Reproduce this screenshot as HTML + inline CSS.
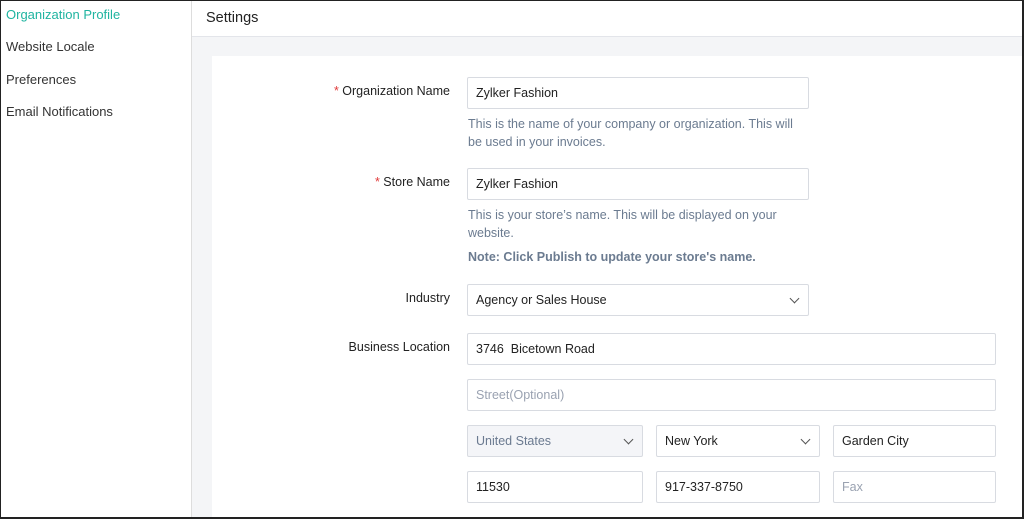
<!DOCTYPE html>
<html><head><meta charset="utf-8"><style>
*{box-sizing:border-box;margin:0;padding:0}
body{width:1024px;height:519px;overflow:hidden;font-family:"Liberation Sans",sans-serif;color:#21263c;background:#fff;position:relative}
.frame{position:absolute;left:0;top:0;width:1024px;height:519px;border:1px solid #222;border-right:2px solid #222;border-bottom:2px solid #222;z-index:10;pointer-events:none}
.side{position:absolute;left:0;top:0;width:192px;height:519px;border-right:1px solid #ddd;background:#fff}
.side div{position:absolute;left:6px;font-size:13px;color:#333}
.head{position:absolute;left:192px;top:0;right:0;height:37px;border-bottom:1px solid #e3e5ea;background:#fff;font-size:14.5px;padding:10px 0 0 14px;color:#222}
.bg{position:absolute;left:192px;top:37px;right:0;bottom:0;background:#f4f5f7}
.card{position:absolute;left:212px;top:56px;right:2px;bottom:0;background:#fff}
.lbl{position:absolute;right:574px;font-size:12.5px;color:#222;text-align:right}
.lbl b{color:#e03a3a;font-weight:normal}
.in{position:absolute;height:32px;border:1px solid #d8dbe1;border-radius:2px;background:#fff;font-size:12.5px;padding:8px 0 0 8px;color:#222}
.ph{color:#9aa2b1}
.dis{background:#f4f5f8;color:#6b7a90}
.hint{position:absolute;left:468px;font-size:12.5px;color:#6b7b90;line-height:18px}
.chev{position:absolute;right:10px;top:10px;width:7px;height:7px;border-right:1px solid #555;border-bottom:1px solid #555;transform:rotate(45deg)}
</style></head><body>
<div class="side">
<div style="top:7px;color:#1fb4a0">Organization Profile</div>
<div style="top:39px">Website Locale</div>
<div style="top:72px">Preferences</div>
<div style="top:104px">Email Notifications</div>
</div>
<div class="head">Settings</div>
<div class="bg"></div>
<div class="card"></div>
<div class="lbl" style="top:84px"><b>*</b> Organization Name</div>
<div class="in" style="left:467px;top:77px;width:342px">Zylker Fashion</div>
<div class="hint" style="top:115px">This is the name of your company or organization. This will<br>be used in your invoices.</div>
<div class="lbl" style="top:175px"><b>*</b> Store Name</div>
<div class="in" style="left:467px;top:168px;width:342px">Zylker Fashion</div>
<div class="hint" style="top:206px">This is your store’s name. This will be displayed on your<br>website.</div>
<div class="hint" style="top:248px;font-weight:bold">Note: Click Publish to update your store's name.</div>
<div class="lbl" style="top:291px">Industry</div>
<div class="in" style="left:467px;top:284px;width:342px">Agency or Sales House<span class="chev"></span></div>
<div class="lbl" style="top:340px">Business Location</div>
<div class="in" style="left:467px;top:333px;width:529px">3746&nbsp; Bicetown Road</div>
<div class="in ph" style="left:467px;top:379px;width:529px">Street(Optional)</div>
<div class="in dis" style="left:467px;top:425px;width:176px">United States<span class="chev"></span></div>
<div class="in" style="left:656px;top:425px;width:164px">New York<span class="chev"></span></div>
<div class="in" style="left:833px;top:425px;width:163px">Garden City</div>
<div class="in" style="left:467px;top:471px;width:176px">11530</div>
<div class="in" style="left:656px;top:471px;width:164px">917-337-8750</div>
<div class="in ph" style="left:833px;top:471px;width:163px">Fax</div>
<div class="frame"></div>
</body></html>
